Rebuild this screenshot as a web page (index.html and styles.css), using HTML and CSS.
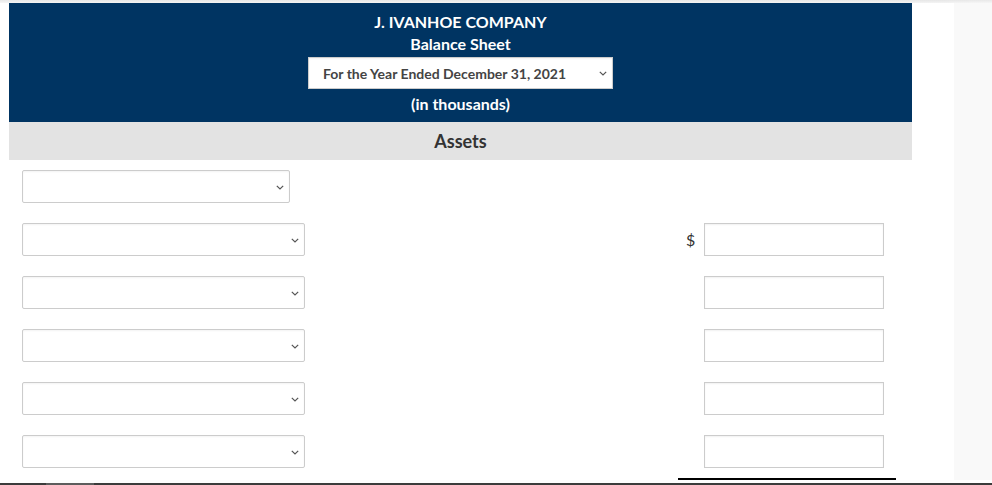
FILE: index.html
```html
<!DOCTYPE html>
<html>
<head>
  <title>J. Ivanhoe Company - Balance Sheet</title>
  <link rel="stylesheet" href="styles.css">
</head>
<body>
  <div class="topStrip"></div>
  <div class="page">
    <div class="content">
      <div class="sheetHeader">
        <div class="companyName">J. IVANHOE COMPANY</div>
        <div class="sheetTitle">Balance Sheet</div>
        <div class="selectWrap periodSelect">
          <select>
            <option>For the Year Ended December 31, 2021</option>
          </select>
          <svg class="chevron" width="8" height="5" viewBox="0 0 8 5"><polyline points="0.8,0.8 4,4 7.2,0.8" fill="none" stroke="#555" stroke-width="1.2"/></svg>
        </div>
        <div class="units">(in thousands)</div>
      </div>
      <div class="sectionBand">Assets</div>

      <div class="rows">
        <div class="row">
          <div class="selectWrap short">
            <select><option></option></select>
            <svg class="chevron" width="8" height="5" viewBox="0 0 8 5"><polyline points="0.8,0.8 4,4 7.2,0.8" fill="none" stroke="#555" stroke-width="1.2"/></svg>
          </div>
        </div>
        <div class="row">
          <div class="selectWrap">
            <select><option></option></select>
            <svg class="chevron" width="8" height="5" viewBox="0 0 8 5"><polyline points="0.8,0.8 4,4 7.2,0.8" fill="none" stroke="#555" stroke-width="1.2"/></svg>
          </div>
          <div class="amount"><span class="currency">$</span><input type="text"></div>
        </div>
        <div class="row">
          <div class="selectWrap">
            <select><option></option></select>
            <svg class="chevron" width="8" height="5" viewBox="0 0 8 5"><polyline points="0.8,0.8 4,4 7.2,0.8" fill="none" stroke="#555" stroke-width="1.2"/></svg>
          </div>
          <div class="amount"><span class="currency"></span><input type="text"></div>
        </div>
        <div class="row">
          <div class="selectWrap">
            <select><option></option></select>
            <svg class="chevron" width="8" height="5" viewBox="0 0 8 5"><polyline points="0.8,0.8 4,4 7.2,0.8" fill="none" stroke="#555" stroke-width="1.2"/></svg>
          </div>
          <div class="amount"><span class="currency"></span><input type="text"></div>
        </div>
        <div class="row">
          <div class="selectWrap">
            <select><option></option></select>
            <svg class="chevron" width="8" height="5" viewBox="0 0 8 5"><polyline points="0.8,0.8 4,4 7.2,0.8" fill="none" stroke="#555" stroke-width="1.2"/></svg>
          </div>
          <div class="amount"><span class="currency"></span><input type="text"></div>
        </div>
        <div class="row">
          <div class="selectWrap">
            <select><option></option></select>
            <svg class="chevron" width="8" height="5" viewBox="0 0 8 5"><polyline points="0.8,0.8 4,4 7.2,0.8" fill="none" stroke="#555" stroke-width="1.2"/></svg>
          </div>
          <div class="amount"><span class="currency"></span><input type="text"></div>
        </div>
        <div class="totalRule"></div>
      </div>
    </div>
    <div class="sidebar"></div>
  </div>
  <div class="scrollbar"><div class="scrollThumb"></div></div>
</body>
</html>
```

FILE: styles.css
```css
html, body { margin: 0; height: 100%; }
body {
  font-family: Lato, "Open Sans", Arial, sans-serif;
  color: #333;
  display: flex;
  flex-direction: column;
  height: 485px;
  overflow: hidden;
  background: #fff;
}
.topStrip {
  height: 3px;
  background: linear-gradient(#e8e8e8, #f6f6f6);
}
.page { flex: 1; display: flex; min-height: 0; }
.content {
  flex: 1;
  background: #fff;
  box-shadow: 12px 0 30px rgba(0, 0, 0, 0.02);
}
.sidebar { width: 38px; background: #f9f9f9; }

.sheetHeader {
  margin: 0 42px 0 9px;
  background-color: #003462;
  color: #fff;
  text-align: center;
  font-weight: bold;
  padding: 8px 0 7px;
}
.companyName, .sheetTitle, .units { font-size: 16px; line-height: 22px; }
.units { margin-top: 4px; }

.selectWrap { position: relative; width: 283px; height: 33px; }
.selectWrap.short { width: 268px; }
.selectWrap select {
  -webkit-appearance: none;
  appearance: none;
  width: 100%;
  height: 100%;
  margin: 0;
  border: 1px solid #ccc;
  border-radius: 2px;
  background: #fff;
  box-shadow: inset 0 1px 2px rgba(0, 0, 0, 0.05);
  font-family: Lato, Arial, sans-serif;
  color: #444;
  outline: none;
}
.selectWrap .chevron {
  position: absolute;
  right: 6px;
  top: 15px;
  pointer-events: none;
}
.periodSelect {
  width: 305px;
  height: 32px;
  margin: 2px auto 0;
  text-align: left;
}
.periodSelect select {
  border-radius: 0;
  padding: 0 0 0 14px;
  font-size: 14px;
  font-weight: bold;
}
.periodSelect .chevron { top: 14px; }

.sectionBand {
  margin: 0 42px 0 9px;
  background-color: #e3e3e3;
  text-align: center;
  font-size: 18px;
  font-weight: bold;
  line-height: 38px;
  color: #333;
}

.rows {
  display: flex;
  flex-direction: column;
  gap: 20px;
  padding: 10px 70px 0 22px;
}
.row { display: flex; align-items: center; height: 33px; }
.amount { margin-left: auto; display: flex; align-items: center; }
.currency {
  width: 26px;
  box-sizing: border-box;
  padding-left: 8px;
  font-size: 16px;
  color: #333;
}
.amount input {
  width: 180px;
  height: 33px;
  box-sizing: border-box;
  margin: 0;
  border: 1px solid #ccc;
  box-shadow: inset 0 1px 2px rgba(0, 0, 0, 0.06);
  outline: none;
}
.totalRule {
  align-self: flex-end;
  width: 218px;
  height: 2px;
  margin: -10px -12px 0 0;
  background: #000;
}

.scrollbar {
  height: 2px;
  margin-top: 3px;
  background: #3b3b3b;
  position: relative;
}
.scrollThumb {
  position: absolute;
  left: 46px;
  top: 0;
  width: 48px;
  height: 2px;
  background: #5c5c5c;
}
```
